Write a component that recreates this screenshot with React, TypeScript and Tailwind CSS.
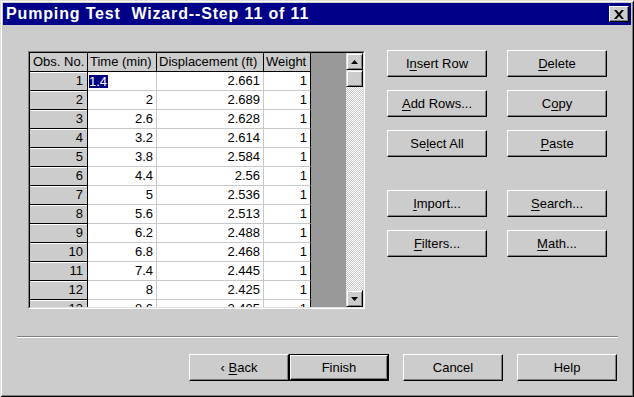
import React from 'react'

const rows: [number, string, string, string][] = [
  [1, '1.4', '2.661', '1'],
  [2, '2', '2.689', '1'],
  [3, '2.6', '2.628', '1'],
  [4, '3.2', '2.614', '1'],
  [5, '3.8', '2.584', '1'],
  [6, '4.4', '2.56', '1'],
  [7, '5', '2.536', '1'],
  [8, '5.6', '2.513', '1'],
  [9, '6.2', '2.488', '1'],
  [10, '6.8', '2.468', '1'],
  [11, '7.4', '2.445', '1'],
  [12, '8', '2.425', '1'],
  [13, '8.6', '2.405', '1'],
]

// label with the mnemonic letter underlined
function Label({ text, u }: { text: string; u?: number }) {
  if (u === undefined) return <span>{text}</span>
  return (
    <span>
      {text.slice(0, u)}
      <span className="underline underline-offset-[2px]">{text[u]}</span>
      {text.slice(u + 1)}
    </span>
  )
}

function Btn({ text, u, def }: { text: string; u?: number; def?: boolean }) {
  if (def) {
    return (
      <div className="w-[100px] h-[27px] border border-black">
        <div className="w-full h-full flex items-center justify-center border border-t-white border-l-white border-r-black border-b-black shadow-[inset_-1px_-1px_0_#808080]">
          <Label text={text} u={u} />
        </div>
      </div>
    )
  }
  return (
    <div className="w-[100px] h-[27px] flex items-center justify-center border border-t-white border-l-white border-r-black border-b-black shadow-[inset_-1px_-1px_0_#808080]">
      <Label text={text} u={u} />
    </div>
  )
}

function ScrollBtn({ up }: { up?: boolean }) {
  return (
    <div className="w-[17px] h-[17px] bg-[#cccccc] flex items-center justify-center border border-t-[#dfdfdf] border-l-[#dfdfdf] border-r-black border-b-black shadow-[inset_1px_1px_0_#fff,inset_-1px_-1px_0_#808080]">
      <svg width="7" height="4" viewBox="0 0 7 4">
        {up ? <polygon points="3.5,0 7,4 0,4" fill="#000" /> : <polygon points="0,0 7,0 3.5,4" fill="#000" />}
      </svg>
    </div>
  )
}

function Grid() {
  return (
    <div className="w-[337px] h-[258px] mt-[1px] border border-t-[#808080] border-l-[#808080] border-r-white border-b-white">
      <div className="w-full h-full border border-t-black border-l-black border-r-[#dfdfdf] border-b-[#dfdfdf] flex overflow-hidden">
        {/* cells */}
        <div className="w-[281px] h-full overflow-hidden bg-white">
          <div className="grid grid-cols-[58px_69px_107px_47px] auto-rows-[19px]">
            {['Obs. No.', 'Time (min)', 'Displacement (ft)', 'Weight'].map((h, i) => (
              <div
                key={h}
                className={
                  'bg-[#cccccc] border-b border-r border-black flex items-center whitespace-nowrap overflow-hidden ' +
                  (i === 0 ? 'pl-[3px]' : 'pl-[2px]')
                }
              >
                {h}
              </div>
            ))}
            {rows.map(([n, t, d, w]) => (
              <React.Fragment key={n}>
                <div className="bg-[#cccccc] border-b border-r border-black shadow-[inset_0_1px_0_#fff] flex items-center justify-end pr-[4px]">
                  {n}
                </div>
                {n === 1 ? (
                  <div className="border-b border-r border-[#c8c8c8] flex items-center pl-[1px]">
                    <span className="bg-[#000080] text-white leading-[13px] pr-[1px]">{t}</span>
                  </div>
                ) : (
                  <div className="border-b border-r border-[#c8c8c8] flex items-center justify-end pr-[3px]">{t}</div>
                )}
                <div className="border-b border-r border-[#c8c8c8] flex items-center justify-end pr-[3px]">{d}</div>
                <div className="border-b border-r border-b-[#c8c8c8] border-r-black flex items-center justify-end pr-[3px]">{w}</div>
              </React.Fragment>
            ))}
          </div>
        </div>
        {/* empty area */}
        <div className="flex-1 h-full bg-[#999999]" />
        {/* vertical scrollbar */}
        <div className="w-[17px] h-full flex flex-col bg-[repeating-conic-gradient(#ffffff_0_25%,#c8c8c8_0_50%)] bg-[length:2px_2px]">
          <ScrollBtn up />
          <div className="w-[17px] h-[17px] bg-[#cccccc] border border-t-[#dfdfdf] border-l-[#dfdfdf] border-r-black border-b-black shadow-[inset_1px_1px_0_#fff,inset_-1px_-1px_0_#808080]" />
          <div className="flex-1" />
          <ScrollBtn />
        </div>
      </div>
    </div>
  )
}

export default function App() {
  return (
    <div className="w-[634px] h-[397px] bg-[#cccccc] text-black text-[13px] font-['Liberation_Sans',Arial,sans-serif] flex flex-col shadow-[inset_1px_1px_0_#dfdfdf,inset_-1px_-1px_0_#000,inset_2px_2px_0_#fff,inset_-2px_-2px_0_#808080]">
      {/* Title bar */}
      <div className="mt-[3px] mx-[3px] h-[22px] bg-[#000088] flex items-center justify-between pl-[3px] pr-[2px]">
        <span className="text-white font-bold text-[16px] tracking-[0.85px] whitespace-pre">Pumping Test  Wizard--Step 11 of 11</span>
        <div className="w-[20px] h-[16px] bg-[#cccccc] flex items-center justify-center border border-t-white border-l-white border-r-black border-b-black shadow-[inset_-1px_-1px_0_#808080]">
          <svg width="10" height="9" viewBox="0 0 10 9">
            <path d="M0 0h2.5l2.5 3 2.5-3H10L6.3 4.5 10 9H7.5L5 6 2.5 9H0l3.7-4.5z" fill="#000" />
          </svg>
        </div>
      </div>

      {/* Grid and side buttons */}
      <div className="mt-[25px] pl-[28px] flex items-start">
        <Grid />
        <div className="ml-[22px] flex flex-col gap-y-[13px]">
          <div className="flex gap-x-[20px]">
            <Btn text="Insert Row" u={1} />
            <Btn text="Delete" u={0} />
          </div>
          <div className="flex gap-x-[20px]">
            <Btn text="Add Rows..." u={0} />
            <Btn text="Copy" u={1} />
          </div>
          <div className="flex gap-x-[20px]">
            <Btn text="Select All" u={2} />
            <Btn text="Paste" u={0} />
          </div>
          <div className="flex gap-x-[20px] mt-[20px]">
            <Btn text="Import..." u={0} />
            <Btn text="Search..." u={0} />
          </div>
          <div className="flex gap-x-[20px]">
            <Btn text="Filters..." u={0} />
            <Btn text="Math..." u={0} />
          </div>
        </div>
      </div>

      {/* separator */}
      <div className="mt-[27px] ml-[17px] w-[601px] h-[2px] border-t border-b border-t-[#808080] border-b-white" />

      {/* wizard buttons */}
      <div className="mt-[16px] pr-[17px] flex justify-end">
        <Btn text="‹ Back" u={2} />
        <Btn text="Finish" def />
        <div className="ml-[14px]">
          <Btn text="Cancel" />
        </div>
        <div className="ml-[14px]">
          <Btn text="Help" />
        </div>
      </div>
    </div>
  )
}
